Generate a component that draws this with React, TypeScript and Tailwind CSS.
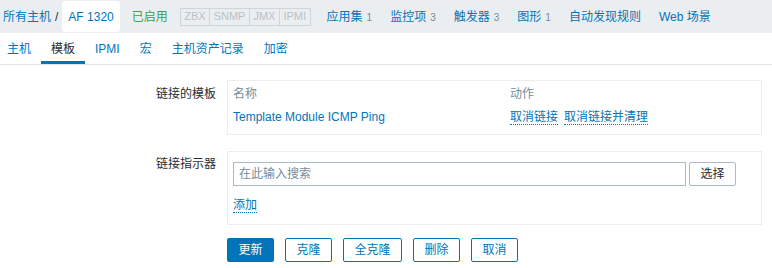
const font = "font-['Liberation_Sans','Noto_Sans_CJK_SC',sans-serif]";

function NavItem({ label, count }: { label: string; count?: string }) {
  return (
    <span className="text-[#0275b8] whitespace-nowrap">
      {label}
      {count && <span className="text-[#768d99] text-[10px] ml-[4px]">{count}</span>}
    </span>
  );
}

function Btn({ label, primary, w }: { label: string; primary?: boolean; w: string }) {
  return (
    <button
      className={
        primary
          ? `h-[24px] ${w} rounded-[2px] bg-[#0275b8] border border-[#0275b8] text-white`
          : `h-[24px] ${w} rounded-[2px] bg-white border border-[#0275b8] text-[#0275b8]`
      }
    >
      {label}
    </button>
  );
}

export default function App() {
  return (
    <div className={`${font} text-[12px] text-[#1f2c33] bg-white w-[772px] h-[268px] overflow-hidden`}>
      {/* host header bar */}
      <div className="h-[33px] bg-[#ebeef0] flex items-center pl-[3px]">
        <span className="text-[#0275b8]">所有主机</span>
        <span className="mx-[4px] text-[#1f2c33]">/</span>
        <span className="h-[31px] flex items-center bg-white rounded-[3px] px-[6px] text-[#0275b8]">AF 1320</span>
        <span className="ml-[12px] text-[#429e47]">已启用</span>
        <div className="ml-[12px] flex h-[18px] text-[11px] text-[#b8c2c6]">
          <span className="border border-[#cfd6da] px-[3.5px] flex items-center">ZBX</span>
          <span className="border border-l-0 border-[#cfd6da] px-[3.5px] flex items-center">SNMP</span>
          <span className="border border-l-0 border-[#cfd6da] px-[3.5px] flex items-center">JMX</span>
          <span className="border border-l-0 border-[#cfd6da] px-[3.5px] flex items-center">IPMI</span>
        </div>
        <div className="ml-[16px] flex items-center gap-[18px]">
          <NavItem label="应用集" count="1" />
          <NavItem label="监控项" count="3" />
          <NavItem label="触发器" count="3" />
          <NavItem label="图形" count="1" />
          <NavItem label="自动发现规则" />
          <NavItem label="Web 场景" />
        </div>
      </div>

      {/* tabs */}
      <div className="h-[32px] flex border-b border-[#dfe4e7]">
        <span className="pl-[7px] pr-[10px] flex items-center text-[#0275b8]">主机</span>
        <span className="px-[10px] flex items-center border-b-[3px] border-[#0275b8] pt-[3px]">模板</span>
        <span className="px-[10px] flex items-center text-[#0275b8]">IPMI</span>
        <span className="px-[10px] flex items-center text-[#0275b8]">宏</span>
        <span className="px-[10px] flex items-center text-[#0275b8]">主机资产记录</span>
        <span className="px-[10px] flex items-center text-[#0275b8]">加密</span>
      </div>

      {/* form */}
      <div className="pt-[15px] flex flex-col gap-[16px]">
        <div className="flex gap-[11px]">
          <div className="w-[216px] text-right pt-[5px]">链接的模板</div>
          <div className="w-[535px] h-[55px] border border-[#ebeef0] px-[5px] pt-[5px]">
            <div className="flex text-[#768d99] h-[16px] items-center">
              <span className="w-[277px]">名称</span>
              <span>动作</span>
            </div>
            <div className="flex text-[#0275b8] mt-[7px] h-[16px] items-center">
              <span className="w-[277px]">Template Module ICMP Ping</span>
              <span className="border-b border-dotted border-[#0275b8] leading-[14px]">取消链接</span>
              <span className="ml-[6px] border-b border-dotted border-[#0275b8] leading-[14px]">取消链接并清理</span>
            </div>
          </div>
        </div>

        <div className="flex gap-[11px]">
          <div className="w-[216px] text-right pt-[4px]">链接指示器</div>
          <div className="w-[535px] h-[74px] border border-[#ebeef0] px-[5px] pt-[10px]">
            <div className="flex gap-[3px]">
              <input
                className="w-[453px] h-[24px] border border-[#acbbc2] px-[5px] outline-none placeholder:text-[#768d99]"
                placeholder="在此输入搜索"
              />
              <button className="w-[47px] h-[24px] border border-[#acbbc2] rounded-[2px] bg-white">选择</button>
            </div>
            <div className="mt-[10px]">
              <span className="text-[#0275b8] border-b border-dotted border-[#0275b8] leading-[14px]">添加</span>
            </div>
          </div>
        </div>

        <div className="flex gap-[11px] pl-[227px] -mt-[3px]">
          <Btn label="更新" primary w="w-[47px]" />
          <Btn label="克隆" w="w-[47px]" />
          <Btn label="全克隆" w="w-[59px]" />
          <Btn label="删除" w="w-[47px]" />
          <Btn label="取消" w="w-[47px]" />
        </div>
      </div>
    </div>
  );
}
